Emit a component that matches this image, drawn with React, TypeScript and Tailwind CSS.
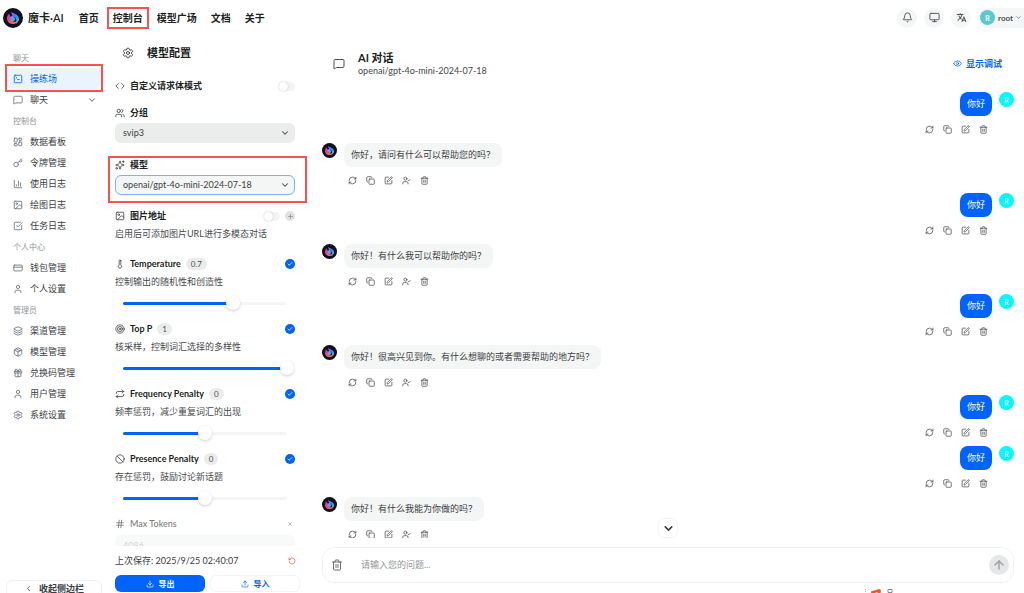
import React from "react";
import {
  ArrowUp, Ban, Bell, ChartColumn, Check, ChevronDown, ChevronLeft, Code, Copy, CreditCard, Download,
  Eye, Gift, Hash, Image, Key, Layers, LayoutDashboard, MessageSquare, Monitor, Package, Plus,
  RefreshCw, Repeat, RotateCcw, Settings, Sparkles, SquareCheckBig, SquarePen, SquareTerminal, Target,
  Thermometer, Trash2, Upload, User, UserCheck, Users, X, type LucideIcon,
} from "lucide-react";
import { IoLanguage } from "react-icons/io5";

type Item = { label: string; icon: LucideIcon; active?: boolean; more?: boolean };

const sections: { title: string; items: Item[] }[] = [
  { title: "聊天", items: [{ label: "操练场", icon: SquareTerminal, active: true }, { label: "聊天", icon: MessageSquare, more: true }] },
  {
    title: "控制台",
    items: [
      { label: "数据看板", icon: LayoutDashboard },
      { label: "令牌管理", icon: Key },
      { label: "使用日志", icon: ChartColumn },
      { label: "绘图日志", icon: Image },
      { label: "任务日志", icon: SquareCheckBig },
    ],
  },
  { title: "个人中心", items: [{ label: "钱包管理", icon: CreditCard }, { label: "个人设置", icon: User }] },
  {
    title: "管理员",
    items: [
      { label: "渠道管理", icon: Layers },
      { label: "模型管理", icon: Package },
      { label: "兑换码管理", icon: Gift },
      { label: "用户管理", icon: User },
      { label: "系统设置", icon: Settings },
    ],
  },
];

const params = [
  { name: "Temperature", value: "0.7", desc: "控制输出的随机性和创造性", icon: Thermometer, min: 0, max: 1, now: 0.67 },
  { name: "Top P", value: "1", desc: "核采样，控制词汇选择的多样性", icon: Target, min: 0, max: 1, now: 1 },
  { name: "Frequency Penalty", value: "0", desc: "频率惩罚，减少重复词汇的出现", icon: Repeat, min: -2, max: 2, now: 0 },
  { name: "Presence Penalty", value: "0", desc: "存在惩罚，鼓励讨论新话题", icon: Ban, min: -2, max: 2, now: 0 },
];

const messages = [
  { user: true, text: "你好" },
  { user: false, text: "你好，请问有什么可以帮助您的吗？" },
  { user: true, text: "你好" },
  { user: false, text: "你好！有什么我可以帮助你的吗？" },
  { user: true, text: "你好" },
  { user: false, text: "你好！很高兴见到你。有什么想聊的或者需要帮助的地方吗？" },
  { user: true, text: "你好" },
  { user: true, text: "你好" },
  { user: false, text: "你好！有什么我能为你做的吗？" },
];

function Logo({ className }: { className: string }) {
  return (
    <svg viewBox="0 0 40 40" className={className} aria-hidden="true">
      <defs>
        <linearGradient id="swirl" x1="0" y1="0" x2="1" y2="1">
          <stop offset="0" stopColor="#c04ff0" />
          <stop offset="0.45" stopColor="#3b82f6" />
          <stop offset="1" stopColor="#22c8f0" />
        </linearGradient>
        <linearGradient id="flame" x1="0" y1="0" x2="0.6" y2="1">
          <stop offset="0" stopColor="#d026c3" />
          <stop offset="1" stopColor="#fb6a3c" />
        </linearGradient>
      </defs>
      <circle cx="20" cy="20" r="20" fill="#10101e" />
      <path d="M12 11C5 18 7 30 18 32c4 .6 8-1 10-4-7 1-12-3-12-9 0-3-3-4-4-8z" fill="url(#flame)" />
      <path d="M17 7c1 4 10 4 13 9 4 6 1 14-5 16 3-5 2-10-1-13-3-3-8-4-7-12z" fill="url(#swirl)" />
      <path d="M16 24c-2-5 1-9 5-9-1 3 4 4 3 8-1 4-6 5-8 1z" fill="#4fa8f8" />
      <path d="M24 29c3-1 6-3 7-6" fill="none" stroke="#fb8a5c" strokeWidth="2" strokeLinecap="round" />
    </svg>
  );
}

function Toggle({ label }: { label: string }) {
  return (
    <input
      type="checkbox"
      role="switch"
      aria-label={label}
      className="h-[9px] w-4 appearance-none rounded-full bg-[#f3f4f4] before:block before:size-[9px] before:rounded-full before:bg-white before:shadow-[0_0_2px_rgba(0,0,0,0.25)]"
    />
  );
}

function Select({ id, value, focus }: { id: string; value: string; focus?: boolean }) {
  return (
    <div className="relative">
      <select
        id={id}
        className={`block h-5 w-full appearance-none rounded-md border px-[7px] text-[9px] leading-3 text-[#3c3f44] outline-none ${focus ? "border-[#7db0ff] bg-[#f4f6f5]" : "border-[#ebecec] bg-[#ebecec]"}`}
      >
        <option>{value}</option>
      </select>
      <ChevronDown className="pointer-events-none absolute top-[5px] right-[5px] size-[10px] text-[#45484d]" strokeWidth={2.5} />
    </div>
  );
}

function Actions({ user }: { user: boolean }) {
  const list: [string, LucideIcon][] = [["重试", RefreshCw], ["复制", Copy], ["编辑", SquarePen]];
  if (!user) list.push(["切换角色", UserCheck]);
  list.push(["删除", Trash2]);
  return (
    <div className={`mt-[6px] flex h-[14px] items-center gap-[9px] ${user ? "mr-1" : "ml-1"}`}>
      {list.map(([label, Icon]) => (
        <button key={label} aria-label={label} className="text-[#4b4e53]">
          <Icon className="size-[9px]" />
        </button>
      ))}
    </div>
  );
}

export default function App() {
  return (
    <div className="flex h-screen flex-col overflow-hidden bg-white font-['Lato','Noto_Sans_CJK_SC',sans-serif] text-[9px] leading-3 text-[#1c1f23]">
      <header className="flex h-[35px] shrink-0 items-center justify-between pl-[3px]">
        <div className="flex items-center">
          <Logo className="size-5" />
          <span className="ml-[5px] text-[11px] leading-4 font-semibold">魔卡·AI</span>
          <nav className="ml-[15px] flex items-center gap-[14px] text-[10px] leading-4 font-bold">
            <a href="#home">首页</a>
            <a href="#console" className="relative">
              控制台
              <span aria-hidden="true" className="pointer-events-none absolute -inset-x-[6px] -inset-y-[3px] border-2 border-[#fb5050]" />
            </a>
            <a href="#models">模型广场</a>
            <a href="#docs">文档</a>
            <a href="#about">关于</a>
          </nav>
        </div>
        <div className="flex items-center gap-[7px] text-[#4b4e53]">
          <button aria-label="通知" className="flex size-5 items-center justify-center rounded-full bg-[#f5f6f6]">
            <Bell className="size-[11px]" />
          </button>
          <button aria-label="主题" className="flex size-5 items-center justify-center rounded-full bg-[#f5f6f6]">
            <Monitor className="size-[11px]" />
          </button>
          <button aria-label="语言" className="flex size-5 items-center justify-center rounded-full bg-[#f5f6f6]">
            <IoLanguage className="size-[11px]" />
          </button>
          <button className="flex h-5 items-center rounded-l-full bg-[#f5f6f6] pr-[2px] pl-[2px] text-[8px] font-bold">
            <span className="flex size-[15px] items-center justify-center rounded-full bg-[#5ac8cf] text-[7px] text-white">R</span>
            <span className="ml-[3px]">root</span>
            <ChevronDown className="ml-[2px] size-[7px]" />
          </button>
        </div>
      </header>

      <div className="flex min-h-0 flex-1">
        <aside className="flex w-[108px] shrink-0 flex-col px-[6px] pt-3">
          <div className="flex-1">
            {sections.map((s) => (
              <section key={s.title}>
                <h2 className="flex h-[21px] items-center pl-[7px] text-[8px] text-[#929598]">{s.title}</h2>
                {s.items.map(({ label, icon: Icon, active, more }) => (
                  <a
                    key={label}
                    href={`#${label}`}
                    className={`relative flex h-[21px] items-center rounded-md pr-[5px] pl-[7px] ${active ? "bg-[#eaf4ff] text-[#0064fa]" : "text-[#3b3e43]"}`}
                  >
                    <Icon className={`size-[10px] ${active ? "" : "text-[#6a6d71]"}`} />
                    <span className="ml-[7px] flex-1">{label}</span>
                    {more && <ChevronDown className="size-[10px]" />}
                    {active && <span aria-hidden="true" className="pointer-events-none absolute -inset-x-px -top-[4px] -bottom-[3px] z-10 border-2 border-[#fb5050]" />}
                  </a>
                ))}
              </section>
            ))}
          </div>
          <div className="h-[13px]">
            <button className="flex h-[17px] w-full items-center justify-center gap-[6px] rounded-md border border-[#f0f1f1] font-semibold text-[#3b3e43]">
              <ChevronLeft className="size-[9px]" />
              收起侧边栏
            </button>
          </div>
        </aside>

        <section className="flex w-[192px] shrink-0 flex-col">
          <div className="flex h-9 shrink-0 items-center gap-[13px] pl-[14px]">
            <Settings className="size-3 text-[#4b4e53]" />
            <h1 className="text-[11px] leading-4 font-bold">模型配置</h1>
          </div>
          <div className="-mr-2 min-h-0 flex-1 overflow-hidden pr-[13px] pl-[7px]">
            <div className="mt-[9px] flex h-3 items-center">
              <Code className="size-[10px] text-[#45484d]" />
              <span className="ml-[5px] flex-1 font-bold">自定义请求体模式</span>
              <Toggle label="自定义请求体模式" />
            </div>
            <div className="mt-[15px] flex h-3 items-center">
              <Users className="size-[10px] text-[#45484d]" />
              <label htmlFor="group" className="ml-[5px] font-bold">分组</label>
            </div>
            <div className="mt-[4px]">
              <Select id="group" value="svip3" />
            </div>
            <div className="relative mt-4">
              <div className="flex h-3 items-center">
                <Sparkles className="size-[10px] text-[#45484d]" />
                <label htmlFor="model" className="ml-[5px] font-bold">模型</label>
              </div>
              <div className="mt-[4px]">
                <Select id="model" value="openai/gpt-4o-mini-2024-07-18" focus />
              </div>
              <span aria-hidden="true" className="pointer-events-none absolute -top-[3px] -right-[12px] -bottom-[8px] -left-[7px] border-2 border-[#fb5050]" />
            </div>
            <div className="mt-[15px] flex h-3 items-center">
              <Image className="size-[10px] text-[#45484d]" />
              <span className="ml-[5px] flex-1 font-bold">图片地址</span>
              <Toggle label="图片地址" />
              <button aria-label="添加图片" className="ml-[5px] flex size-[10px] items-center justify-center rounded-full bg-[#e0e1e2] text-[#75787c]">
                <Plus className="size-[7px]" />
              </button>
            </div>
            <p className="mt-[6px] text-[#45484d]">启用后可添加图片URL进行多模态对话</p>
            {params.map(({ name, value, desc, icon: Icon, min, max, now }, i) => {
              const pct = ((now - min) / (max - min)) * 100;
              return (
                <div key={name} className={`h-[65px] ${i === 0 ? "mt-[18px]" : ""}`}>
                  <div className="flex h-3 items-center">
                    <Icon className="size-[10px] text-[#45484d]" />
                    <label htmlFor={name} className="ml-[5px] font-bold">{name}</label>
                    <span className="ml-[5px] rounded-full bg-[#ebecec] px-[5px] text-[8px] text-[#4b4e53]">{value}</span>
                    <button aria-label={`启用 ${name}`} className="ml-auto flex size-[10px] items-center justify-center rounded-full bg-[#0064fa] text-white">
                      <Check className="size-[6px]" strokeWidth={3} />
                    </button>
                  </div>
                  <p className="mt-[6px] text-[#45484d]">{desc}</p>
                  <div className="relative mx-[8px] mt-[7px] flex h-4 items-center">
                    <div className="h-[3px] w-full rounded-full bg-[#f4f5f5]">
                      <div className="h-full rounded-full bg-[#0064fa]" style={{ width: `${pct}%` }} />
                    </div>
                    <input
                      id={name}
                      type="range"
                      min={min}
                      max={max}
                      step={0.01}
                      defaultValue={now}
                      className="absolute -inset-x-[7px] top-0 h-4 appearance-none bg-transparent [&::-webkit-slider-thumb]:size-[14px] [&::-webkit-slider-thumb]:appearance-none [&::-webkit-slider-thumb]:rounded-full [&::-webkit-slider-thumb]:bg-white [&::-webkit-slider-thumb]:shadow-[0_1px_3px_rgba(0,0,0,0.2)]"
                    />
                  </div>
                </div>
              );
            })}
            <div className="opacity-60">
              <div className="flex h-3 items-center">
                <Hash className="size-[10px]" />
                <label htmlFor="max" className="ml-[5px] font-medium">Max Tokens</label>
                <button aria-label="停用 Max Tokens" className="ml-auto flex size-[10px] items-center justify-center">
                  <X className="size-[6px]" />
                </button>
              </div>
              <input id="max" readOnly value="4096" className="mt-[5px] block h-5 w-full rounded-md bg-[#f5f6f6] px-[8px] text-[#b5b7ba]" />
            </div>
          </div>
          <div className="flex h-[29px] shrink-0 items-center justify-between pr-1 pl-[7px] text-[#3b3e43]">
            <span>上次保存: 2025/9/25 02:40:07</span>
            <button aria-label="重置" className="text-[#f5553d]">
              <RotateCcw className="size-2" />
            </button>
          </div>
          <div className="mb-px ml-[7px] grid h-[17px] shrink-0 grid-cols-2 gap-[5px] font-bold">
            <button className="flex items-center justify-center gap-[5px] rounded-md bg-[#0064fa] text-[8px] text-white">
              <Download className="size-2" />
              导出
            </button>
            <button className="flex items-center justify-center gap-[5px] rounded-md border border-[#f3f4f4] text-[8px] text-[#0064fa]">
              <Upload className="size-2" />
              导入
            </button>
          </div>
        </section>

        <main className="flex min-w-0 flex-1 flex-col pr-[10px] pl-[22px]">
          <div className="flex h-[57px] shrink-0 items-center justify-between pr-3 pl-[11px]">
            <div className="flex items-center gap-[13px]">
              <MessageSquare className="size-3 text-[#4b4e53]" />
              <div>
                <h2 className="text-[11px] leading-[14px] font-bold">AI 对话</h2>
                <p className="text-[#45484d]">openai/gpt-4o-mini-2024-07-18</p>
              </div>
            </div>
            <button className="flex items-center gap-1 font-bold text-[#0064fa]">
              <Eye className="size-[9px]" />
              显示调试
            </button>
          </div>
          <div className="relative min-h-0 flex-1">
            <div className="h-full overflow-hidden">
              {messages.map((m, i) => (
                <div key={i} className={`flex gap-[7px] ${m.user ? "h-[51px] flex-row-reverse" : "h-[50px]"}`}>
                  {m.user ? (
                    <span className="flex size-[15px] items-center justify-center rounded-full bg-[#00f8ff] text-[7px] text-white">R</span>
                  ) : (
                    <Logo className="size-[15px]" />
                  )}
                  <div className={`flex flex-col ${m.user ? "items-end" : "items-start"}`}>
                    <p className={`rounded-lg px-[7px] py-[6px] ${m.user ? "bg-[#0064fa] text-white" : "bg-[#f4f6f5] text-[#3b3e43]"}`}>{m.text}</p>
                    <Actions user={m.user} />
                  </div>
                </div>
              ))}
            </div>
            <button aria-label="滚动到底部" className="absolute bottom-0 left-1/2 flex size-5 -translate-x-1/2 items-center justify-center rounded-md border border-[#f3f4f4] bg-white text-[#3b3e43]">
              <ChevronDown className="size-[13px]" strokeWidth={3} />
            </button>
          </div>
          <form className="mt-[9px] flex h-9 shrink-0 items-center rounded-xl border border-[#f0f1f2] pr-1 pl-2">
            <button type="button" aria-label="清空对话" className="text-[#6a6d71]">
              <Trash2 className="size-3" />
            </button>
            <input aria-label="问题" placeholder="请输入您的问题..." className="ml-[18px] min-w-0 flex-1 outline-none placeholder:text-[#929598]" />
            <button type="button" aria-label="发送" className="flex size-5 items-center justify-center rounded-full bg-[#e6e7e8] text-[#a0a2a5]">
              <ArrowUp className="size-[14px]" strokeWidth={2.5} />
            </button>
          </form>
          <div className="flex h-[10px] shrink-0 items-start justify-end gap-[5px] overflow-hidden pt-[6px] pr-[120px]">
            <span className="h-[7px] border-l border-dotted border-[#b5b7ba]" />
            <svg viewBox="0 0 10 10" className="size-[10px]" aria-hidden="true">
              <path d="M0 2.5 8 0l2 1-1 7-8 1z" fill="#fb5424" />
              <path d="M2.5 4.5 6.5 3 6 6l-3 .5z" fill="#ffffff" />
            </svg>
            <svg viewBox="0 0 8 8" className="size-2" fill="none" stroke="#85888c" aria-hidden="true">
              <path d="M2 .5h4v3H2zM.5 7.5v-2h7v2" />
            </svg>
          </div>
        </main>
      </div>
    </div>
  );
}
